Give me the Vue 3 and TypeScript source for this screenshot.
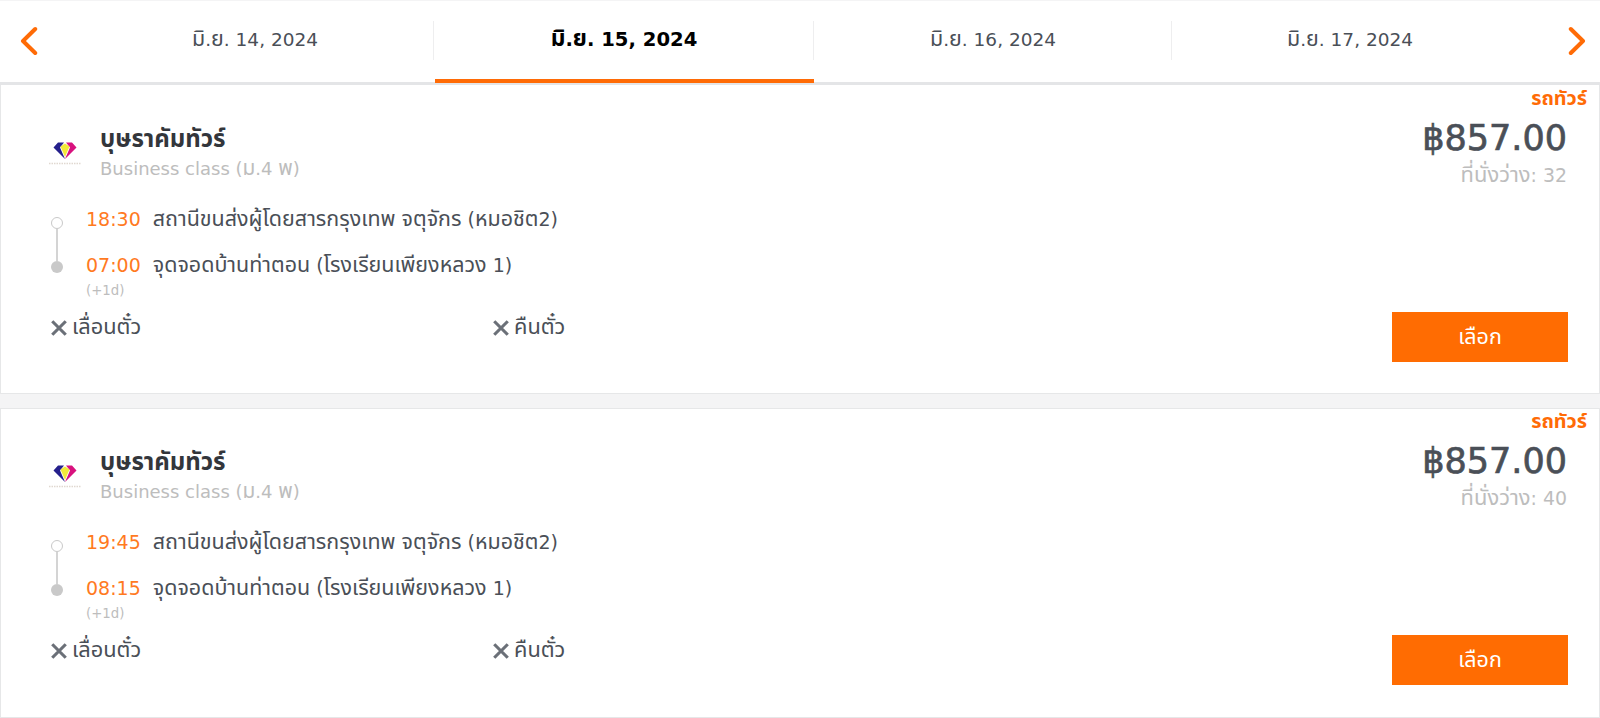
<script setup lang="ts">
const dates = [
  { label: 'มิ.ย. 14, 2024', active: false },
  { label: 'มิ.ย. 15, 2024', active: true },
  { label: 'มิ.ย. 16, 2024', active: false },
  { label: 'มิ.ย. 17, 2024', active: false },
]
const trips = [
  { dep: '18:30', arr: '07:00', seats: 32 },
  { dep: '19:45', arr: '08:15', seats: 40 },
]
type Part = { text: string; thai: boolean }
const parts = (s: string): Part[] =>
  (s.match(/[\u0E00-\u0E7F]+|[^\u0E00-\u0E7F]+/g) ?? []).map((text) => ({
    text,
    thai: /[\u0E00-\u0E7F]/.test(text),
  }))
const fromStop = parts('สถานีขนส่งผู้โดยสารกรุงเทพ จตุจักร (หมอชิต2)')
const toStop = parts('จุดจอดบ้านท่าตอน (โรงเรียนเพียงหลวง 1)')
const klass = parts('Business class (ม.4 พ)')
const seatText = (n: number) => parts(`ที่นั่งว่าง: ${n}`)
</script>

<template>
  <div class="page">
    <header class="bar">
      <svg class="arrow" viewBox="0 0 18 30" width="18" height="30"><path d="M15.2 3 3 15l12.2 12" /></svg>
      <nav class="tabs">
        <div v-for="d in dates" :key="d.label" class="tab" :class="{ active: d.active }">
          <span><span v-for="(p, i) in parts(d.label)" :key="i" :class="{ th: p.thai }">{{ p.text }}</span></span>
        </div>
      </nav>
      <svg class="arrow" viewBox="0 0 18 30" width="18" height="30"><path d="M2.8 3 15 15 2.8 27" /></svg>
    </header>

    <article v-for="t in trips" :key="t.dep" class="card">
      <div class="kind th">รถทัวร์</div>
      <div class="main">
        <div class="left">
          <div class="operator">
            <svg class="logo" viewBox="0 0 36 36" width="36" height="36">
              <path d="M6.5 7.500 11 2.500h6L13 7.500l5 11.500Z" fill="#25208c" />
              <path d="M29.500 7.500 25 2.500h-6l4 5-5 11.500Z" fill="#d8127e" />
              <path d="M13.500 6.500 18 3.500l4.500 3L18 17Z" fill="#f2ea3a" />
              <path d="M2 23.500h32" stroke="#e0d8d0" stroke-width="1.600" stroke-dasharray="1.500 1" fill="none" />
            </svg>
            <div class="who">
              <div class="name th">บุษราคัมทัวร์</div>
              <div class="class"><span v-for="(p, i) in klass" :key="i" :class="{ th: p.thai }">{{ p.text }}</span></div>
            </div>
          </div>
          <div class="route">
            <div class="rail">
              <span class="dot open"></span>
              <span class="line"></span>
              <span class="dot full"></span>
            </div>
            <div class="stops">
              <div class="stop"><span class="time">{{ t.dep }}</span><span><span v-for="(p, i) in fromStop" :key="i" :class="{ th: p.thai }">{{ p.text }}</span></span></div>
              <div class="stop"><span class="time">{{ t.arr }}</span><span><span v-for="(p, i) in toStop" :key="i" :class="{ th: p.thai }">{{ p.text }}</span></span></div>
              <div class="plus">(+1d)</div>
            </div>
          </div>
          <div class="rules">
            <div class="rule">
              <svg viewBox="0 0 16 16" width="18" height="18"><path d="M2 2l12 12M14 2 2 14" /></svg>
              <span class="th">เลื่อนตั๋ว</span>
            </div>
            <div class="rule">
              <svg viewBox="0 0 16 16" width="18" height="18"><path d="M2 2l12 12M14 2 2 14" /></svg>
              <span class="th">คืนตั๋ว</span>
            </div>
          </div>
        </div>
        <div class="right">
          <div class="price">฿857.00</div>
          <div class="seats"><span v-for="(p, i) in seatText(t.seats)" :key="i" :class="{ th: p.thai }">{{ p.text }}</span></div>
          <button class="pick"><span class="th">เลือก</span></button>
        </div>
      </div>
    </article>
  </div>
</template>

<style>
html, body { margin: 0; background: #f4f4f5; }
</style>

<style scoped>
.page {
  width: 1600px;
  height: 718px;
  overflow: hidden;
  font-family: "DejaVu Sans", "Noto Sans Thai", sans-serif;
  color: #4a4f57;
}
.th { font-family: "Noto Sans Thai", "DejaVu Sans", sans-serif; font-size: 1.16em; }
.bar {
  height: 81px;
  margin-top: 1px;
  background: #fff;
  border-bottom: 3px solid #e4e5e7;
  display: flex;
  align-items: center;
  padding: 0 14px 0 20px;
}
.arrow { flex: none; margin-top: -2px; }
.arrow path { fill: none; stroke: #ff6b06; stroke-width: 4; stroke-linecap: round; stroke-linejoin: round; }
.tabs {
  flex: 1;
  align-self: stretch;
  display: grid;
  grid-template-columns: 358px 380px 358px 356px;
  padding: 0 0 0 38px;
}
.tab {
  position: relative;
  display: flex;
  align-items: center;
  justify-content: center;
  font-size: 18.5px;
  color: #4a4f57;
  padding-bottom: 5px;
  box-sizing: border-box;
}
.tab:not(:last-child)::after {
  content: "";
  position: absolute;
  right: 0;
  top: 20px;
  height: 39px;
  width: 1px;
  background: #eeeeef;
}
.tab.active {
  font-weight: 700;
  font-size: 19.6px;
  color: #000;
}
.tab.active::before {
  content: "";
  position: absolute;
  left: 1px;
  right: 0;
  bottom: -1px;
  height: 4px;
  background: #ff6b06;
}
.card {
  background: #fff;
  border: 1px solid #e6e7e8;
  border-top: 0;
  height: 309px;
  box-sizing: border-box;
  margin-bottom: 14px;
  padding: 0 32px 0 49px;
  position: relative;
}
.card + .card { height: 310px; box-shadow: inset 0 1px 0 #e6e7e8; }
.kind {
  position: absolute;
  top: 4px;
  right: 12px;
  color: #ff6b06;
  font-size: 19.8px;
  font-weight: 700;
  line-height: 20px;
}
.main { display: flex; justify-content: space-between; }
.left { width: 560px; }
.operator { display: flex; align-items: flex-start; gap: 17px; padding-top: 40px; margin-left: -3px; }
.logo { flex: none; margin-top: 15px; }
.name { font-size: 24px; font-weight: 700; color: #33363b; line-height: 30px; }
.class { font-size: 18px; color: #bdbdbd; line-height: 26px; margin-top: 1px; }
.route { display: flex; margin-top: 24px; }
.rail { width: 14px; display: flex; flex-direction: column; align-items: center; padding-top: 11px; }
.dot { width: 12px; height: 12px; box-sizing: border-box; border-radius: 50%; flex: none; }
.dot.open { border: 1.5px solid #c9c9c9; background: #fff; }
.dot.full { background: #c9c9c9; }
.line { width: 2px; height: 32px; background: #d4d4d4; }
.stops { margin-left: 22px; }
.stop { display: flex; gap: 12px; font-size: 19px; line-height: 26px; height: 46px; color: #4a4f57; white-space: pre; }
.stop .th { font-size: 1.13em; }
.time { color: #ff7a1f; }
.plus { font-size: 13.300px; color: #bdbdbd; line-height: 16px; margin-top: -15px; }
.rules { display: grid; grid-template-columns: 442px 1fr; margin-top: 14px; }
.rule { display: flex; align-items: center; gap: 4px; font-size: 18.8px; line-height: 30px; color: #4a4f57; }
.rule svg { flex: none; }
.rule path { stroke: #6b7078; stroke-width: 2.8; fill: none; }
.right { display: flex; flex-direction: column; align-items: flex-end; padding-top: 31px; }
.price { font-size: 35px; line-height: 44px; color: #4a4f57; -webkit-text-stroke: 0.7px #4a4f57; }
.seats { font-size: 18.9px; color: #bdbdbd; line-height: 26px; margin-top: 2px; white-space: pre; }
.pick {
  margin-top: 123px;
  margin-right: -1px;
  width: 176px;
  height: 50px;
  border: 0;
  padding: 0;
  background: #ff6c02;
  color: #fff;
  font-family: inherit;
  font-size: 18.5px;
}
</style>
